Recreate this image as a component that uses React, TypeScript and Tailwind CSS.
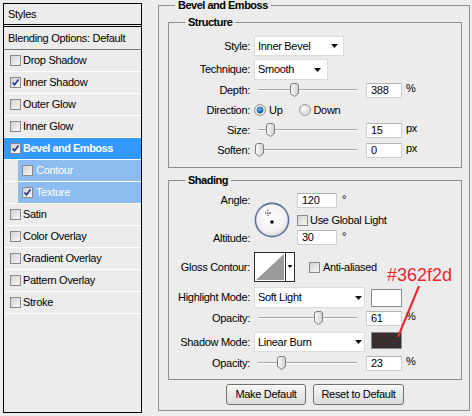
import type { ReactNode } from 'react';

/* Layer Style dialog, Bevel and Emboss page. */

const font = "font-['Liberation_Sans',Arial,sans-serif]";

function Check({ on = false }: { on?: boolean }) {
  return (
    <span className="relative flex h-[11px] w-[11px] shrink-0 items-center justify-center border border-[#8a8a8a] bg-linear-to-br from-[#d2d2d2] to-[#f8f8f8]">
      {on && (
        <svg width="9" height="9" viewBox="0 0 9 9" className="absolute">
          <path d="M1.5 4.5 L3.5 6.8 L7.5 1.5" fill="none" stroke="#25328c" strokeWidth="1.6" />
        </svg>
      )}
    </span>
  );
}

function Radio({ on = false }: { on?: boolean }) {
  return (
    <svg width="12" height="12" viewBox="0 0 12 12" className="shrink-0">
      <defs>
        <radialGradient id={on ? 'rOn' : 'rOff'} cx="40%" cy="35%" r="70%">
          <stop offset="0%" stopColor={on ? '#5fb2ee' : '#ffffff'} />
          <stop offset="100%" stopColor={on ? '#0d4f9a' : '#d6d6d6'} />
        </radialGradient>
      </defs>
      <circle cx="6" cy="6" r="5.4" fill="#f4f4f4" stroke="#8c8c8c" strokeWidth="1" />
      {on ? (
        <circle cx="6" cy="6" r="3.4" fill="url(#rOn)" />
      ) : (
        <circle cx="6" cy="6" r="4" fill="url(#rOff)" />
      )}
    </svg>
  );
}

function Label({ children }: { children: ReactNode }) {
  return <span className="w-[81px] shrink-0 text-right">{children}</span>;
}

function Arrow() {
  return (
    <svg width="7" height="4" viewBox="0 0 7 4" className="shrink-0">
      <path d="M0 0 H7 L3.5 4 Z" fill="#111" />
    </svg>
  );
}

function Select({ value, className }: { value: string; className: string }) {
  return (
    <div className={`flex items-center justify-between border border-[#dcdcdc] bg-white pl-[3px] ${className}`}>
      <span>{value}</span>
      <Arrow />
    </div>
  );
}

function Thumb() {
  return (
    <svg width="9" height="14" viewBox="0 0 9 14">
      <defs>
        <linearGradient id="thumbG" x1="0" y1="0" x2="1" y2="0">
          <stop offset="0%" stopColor="#fdfdfd" />
          <stop offset="100%" stopColor="#cfcfcf" />
        </linearGradient>
      </defs>
      <path d="M0.5 3 Q0.5 0.5 3 0.5 H6 Q8.5 0.5 8.5 3 V10.5 L4.5 13.5 L0.5 10.5 Z" fill="url(#thumbG)" stroke="#7d7d7d" />
    </svg>
  );
}

function Slider({ pos }: { pos: string }) {
  return (
    <div className="relative h-full w-[108px] shrink-0">
      <div className="absolute left-[4px] top-1/2 h-[2px] w-[99px] -translate-y-1/2 border-t border-[#a5a5a5] bg-white" />
      <div className={`absolute top-1/2 flex -translate-y-1/2 ${pos}`}>
        <Thumb />
      </div>
    </div>
  );
}

function Num({ value, className = 'w-[36px]' }: { value: string; className?: string }) {
  return (
    <div className={`flex h-[15px] shrink-0 items-center border border-[#cfcfcf] border-t-[#b4b4b4] bg-white pl-[4px] ${className}`}>
      {value}
    </div>
  );
}

function Group({ title, className, children }: { title: string; className: string; children: ReactNode }) {
  return (
    <div className={`relative border border-[#8f8f8f] ${className}`}>
      <span className="absolute -top-[8px] left-[16px] bg-[#ececec] px-[3px] leading-[14px] font-bold tracking-[-0.5px]">
        {title}
      </span>
      {children}
    </div>
  );
}

function StyleRow({ name, on, kind }: { name: string; on?: boolean; kind?: 'sel' | 'sub' }) {
  if (kind === 'sel') {
    return (
      <div className="flex h-[22px] items-center gap-[2px] border-b border-white bg-[#3399ff] pl-[6px] font-bold tracking-[-0.5px] text-white">
        <Check on={on} />
        {name}
      </div>
    );
  }
  if (kind === 'sub') {
    return (
      <div className="flex h-[22px] border-b border-white">
        <div className="w-[14px]" />
        <div className="flex flex-1 items-center gap-[3px] bg-[#8cbcf0] pl-[4px] text-white">
          <Check on={on} />
          {name}
        </div>
      </div>
    );
  }
  return (
    <div className="flex h-[22px] items-center gap-[2px] border-b border-white pl-[6px]">
      <Check on={on} />
      {name}
    </div>
  );
}

export default function App() {
  return (
    <div className={`relative flex h-[416px] w-[472px] items-start overflow-hidden bg-[#ececec] text-[11px] leading-none tracking-[-0.3px] text-black ${font}`}>
      {/* styles list */}
      <div className="ml-[3px] mt-[3px] flex h-[410px] w-[139px] shrink-0 flex-col border border-black">
        <div className="flex h-[23px] items-center border-b-[3px] border-double border-black pl-[4px]">Styles</div>
        <div className="flex h-[23px] items-center border-b border-[#7a7a7a] pl-[4px]">Blending Options: Default</div>
        <StyleRow name="Drop Shadow" />
        <StyleRow name="Inner Shadow" on />
        <StyleRow name="Outer Glow" />
        <StyleRow name="Inner Glow" />
        <StyleRow name="Bevel and Emboss" on kind="sel" />
        <StyleRow name="Contour" kind="sub" />
        <StyleRow name="Texture" on kind="sub" />
        <StyleRow name="Satin" />
        <StyleRow name="Color Overlay" />
        <StyleRow name="Gradient Overlay" />
        <StyleRow name="Pattern Overlay" />
        <StyleRow name="Stroke" />
      </div>

      {/* settings */}
      <Group title="Bevel and Emboss" className="ml-[16px] mt-[5px] h-[406px] w-[312px] shrink-0">
        <Group title="Structure" className="ml-[9px] mt-[16px] h-[146px] w-[294px]">
          <div className="flex flex-col pt-[13px]">
            <div className="flex h-[20px] items-center gap-[4px]">
              <Label>Style:</Label>
              <Select value="Inner Bevel" className="h-[20px] w-[90px] pr-[5px]" />
            </div>
            <div className="mt-[3px] flex h-[21px] items-center gap-[4px]">
              <Label>Technique:</Label>
              <Select value="Smooth" className="h-[21px] w-[74px] pr-[6px]" />
            </div>
            <div className="flex h-[20px] items-center gap-[4px]">
              <Label>Depth:</Label>
              <Slider pos="left-[36px]" />
              <Num value="388" />
              <span className="-mt-[3px]">%</span>
            </div>
            <div className="flex h-[20px] items-center">
              <Label>Direction:</Label>
              <span className="ml-[4px]"><Radio on /></span>
              <span className="ml-[3px]">Up</span>
              <span className="ml-[17px]"><Radio /></span>
              <span className="ml-[2px]">Down</span>
            </div>
            <div className="flex h-[20px] items-center gap-[4px]">
              <Label>Size:</Label>
              <Slider pos="left-[12px]" />
              <Num value="15" />
              <span className="-mt-[3px]">px</span>
            </div>
            <div className="flex h-[20px] items-center gap-[4px]">
              <Label>Soften:</Label>
              <Slider pos="left-[1px]" />
              <Num value="0" />
              <span className="-mt-[3px]">px</span>
            </div>
          </div>
        </Group>

        <Group title="Shading" className="ml-[9px] mt-[12px] h-[200px] w-[294px]">
          <div className="flex flex-col pt-[12px]">
            <div className="flex items-start">
              <div className="flex w-[81px] flex-col">
                <span className="flex h-[15px] items-center justify-end">Angle:</span>
                <span className="mt-[23px] flex h-[15px] items-center justify-end">Altitude:</span>
              </div>
              <svg width="36" height="36" viewBox="0 0 36 36" className="ml-[4px] mt-[9px] shrink-0">
                <defs>
                  <radialGradient id="dial" cx="45%" cy="40%" r="60%">
                    <stop offset="0%" stopColor="#ffffff" />
                    <stop offset="75%" stopColor="#f1f1f1" />
                    <stop offset="100%" stopColor="#d5d5d5" />
                  </radialGradient>
                </defs>
                <circle cx="18" cy="18" r="16.6" fill="url(#dial)" stroke="#60709c" strokeWidth="1.6" />
                <path d="M14 8 V9 M14 11 V12 M14 13 V14 M11 11 H12 M13 11 H14 M15 11 H16 M16 11 H17" stroke="#222" strokeWidth="1" />
                <rect x="16.5" y="18.5" width="3" height="3" fill="#000" />
              </svg>
              <div className="ml-[7px] flex flex-col">
                <div className="flex items-start">
                  <Num value="120" className="w-[40px]" />
                  <span className="ml-[5px] mt-[1px]">°</span>
                </div>
                <div className="mt-[6px] flex h-[13px] items-center gap-[2px]">
                  <Check />
                  <span>Use Global Light</span>
                </div>
                <div className="mt-[3px] flex items-start">
                  <Num value="30" className="w-[40px]" />
                  <span className="ml-[5px] mt-[1px]">°</span>
                </div>
              </div>
            </div>

            <div className="mt-[6px] flex h-[30px] items-center">
              <Label>Gloss Contour:</Label>
              <svg width="41" height="30" viewBox="0 0 41 30" className="ml-[4px] shrink-0">
                <rect x="0.5" y="0.5" width="40" height="29" fill="#fff" stroke="#2b2b2b" />
                <path d="M2 28 L30 2 V28 Z" fill="#9a9a9a" />
                <path d="M31.5 1 V29" stroke="#2b2b2b" />
                <path d="M33.5 13 H38.5 L36 16 Z" fill="#111" />
              </svg>
              <span className="ml-[14px]"><Check /></span>
              <span className="ml-[3px]">Anti-aliased</span>
            </div>

            <div className="mt-[5px] flex h-[21px] items-center">
              <Label>Highlight Mode:</Label>
              <Select value="Soft Light" className="ml-[4px] h-[21px] w-[111px] pr-[2px]" />
              <div className="ml-[6px] h-[18px] w-[31px] border border-[#8a8a8a] bg-white" />
            </div>
            <div className="mt-[2px] flex h-[16px] items-center gap-[4px]">
              <Label>Opacity:</Label>
              <Slider pos="left-[60px]" />
              <Num value="61" />
              <span className="-mt-[3px]">%</span>
            </div>
            <div className="mt-[6px] flex h-[20px] items-start">
              <span className="flex h-[20px] w-[81px] items-center justify-end">Shadow Mode:</span>
              <Select value="Linear Burn" className="ml-[4px] h-[20px] w-[111px] pr-[2px]" />
              <div className="ml-[6px] h-[17px] w-[31px] border border-[#8a8a8a] bg-[#362f2d]" />
            </div>
            <div className="mt-[3px] flex h-[16px] items-center gap-[4px]">
              <Label>Opacity:</Label>
              <Slider pos="left-[23px]" />
              <Num value="23" />
              <span className="-mt-[3px]">%</span>
            </div>
          </div>
        </Group>

        <div className="mt-[4px] flex gap-[7px] pl-[67px]">
          <button className="flex h-[21px] w-[80px] items-center justify-center rounded-[3px] border border-[#707070] bg-linear-to-b from-[#f7f7f7] to-[#dcdcdc] shadow-[inset_0_1px_0_#fff]">
            Make Default
          </button>
          <button className="flex h-[21px] w-[91px] items-center justify-center rounded-[3px] border border-[#707070] bg-linear-to-b from-[#f7f7f7] to-[#dcdcdc] shadow-[inset_0_1px_0_#fff]">
            Reset to Default
          </button>
        </div>
      </Group>

      {/* annotation */}
      <span className="absolute left-[387px] top-[266px] text-[18px] leading-none tracking-normal text-[#e8262e]">#362f2d</span>
      <svg width="472" height="416" className="pointer-events-none absolute left-0 top-0">
        <line x1="419" y1="286" x2="398" y2="337" stroke="#e8262e" strokeWidth="2" />
      </svg>
    </div>
  );
}
